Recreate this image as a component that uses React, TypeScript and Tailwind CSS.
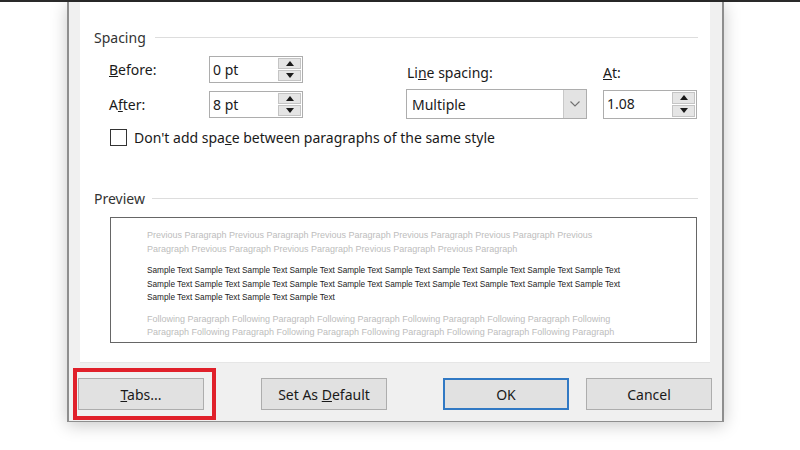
import React from 'react'

// Word "Paragraph" dialog, lower half (Spacing / Preview / buttons)

const prevLines = [
  'Previous Paragraph Previous Paragraph Previous Paragraph Previous Paragraph Previous Paragraph Previous',
  'Paragraph Previous Paragraph Previous Paragraph Previous Paragraph Previous Paragraph',
]
const sampleLines = [
  'Sample Text Sample Text Sample Text Sample Text Sample Text Sample Text Sample Text Sample Text Sample Text Sample Text',
  'Sample Text Sample Text Sample Text Sample Text Sample Text Sample Text Sample Text Sample Text Sample Text Sample Text',
  'Sample Text Sample Text Sample Text Sample Text',
]
const followLines = [
  'Following Paragraph Following Paragraph Following Paragraph Following Paragraph Following Paragraph Following',
  'Paragraph Following Paragraph Following Paragraph Following Paragraph Following Paragraph Following Paragraph',
  'Following Paragraph Following Paragraph Following Paragraph Following Paragraph Following Paragraph Following',
]

const Spinner = () => (
  <div className="flex flex-col gap-[1px] py-[1px] pr-[1px] w-[24px] h-full">
    <div className="flex-1 flex items-center justify-center bg-[#e5e5e5] border border-[#c4c4c4]">
      <svg width="8" height="5" viewBox="0 0 8 5">
        <polygon points="0,5 8,5 4,0" fill="#1a1a1a" />
      </svg>
    </div>
    <div className="flex-1 flex items-center justify-center bg-[#e5e5e5] border border-[#c4c4c4]">
      <svg width="8" height="5" viewBox="0 0 8 5">
        <polygon points="0,0 8,0 4,5" fill="#1a1a1a" />
      </svg>
    </div>
  </div>
)

const SpinBox = ({ value, h }: { value: string; h: string }) => (
  <div className={`flex items-center w-[94px] ${h} bg-white border border-[#adadad]`}>
    <span className="flex-1 pl-[3px] text-[14px] leading-none text-[#1a1a1a]">{value}</span>
    <Spinner />
  </div>
)

const Heading = ({ label, lineStart }: { label: string; lineStart: string }) => (
  <div className="flex items-center h-[20px]">
    <span className="text-[14px] text-[#333]">{label}</span>
    <div className={`flex-1 h-px bg-[#dddddd] ${lineStart}`} />
  </div>
)

const Btn = ({ children, focused }: { children: React.ReactNode; focused?: boolean }) => (
  <div
    className={`w-[126px] h-[32px] flex items-center justify-center bg-[#e1e1e1] text-[14px] text-[#1a1a1a] ${
      focused ? 'border-2 border-[#3179c4]' : 'border border-[#adadad]'
    }`}
  >
    {children}
  </div>
)

export default function App() {
  return (
    <div className="w-[800px] h-[450px] bg-white overflow-hidden font-['Noto_Sans',sans-serif]">
      <div className="h-[2px] bg-[#2a2a2a]" />

      <div className="ml-[67px] w-[657px] bg-[#f0f0f0] border-x-2 border-b border-[#8e8e8e] shadow-[0_3px_16px_rgba(0,0,0,0.22)]">
        {/* white content panel */}
        <div className="ml-[11px] mr-[12px] h-[361px] bg-white pt-[25px] pl-[14px] pr-[12px] border-b border-[#e6e6e6]">
          <Heading label="Spacing" lineStart="ml-[9px]" />

          <div className="flex mt-[9px]">
            <div className="ml-[15px] flex flex-col gap-[8px]">
              <div className="flex items-center h-[27px]">
                <span className="w-[100px] text-[14px] text-[#1a1a1a]">
                  <u>B</u>efore:
                </span>
                <SpinBox value="0 pt" h="h-[27px]" />
              </div>
              <div className="flex items-center h-[27px]">
                <span className="w-[100px] text-[14px] text-[#1a1a1a]">
                  A<u>f</u>ter:
                </span>
                <SpinBox value="8 pt" h="h-[27px]" />
              </div>
            </div>

            <div className="ml-[103px]">
              <div className="flex mt-[6px] h-[20px] items-center text-[14px] text-[#1a1a1a]">
                <span className="w-[197px] pl-[1px]">
                  Li<u>n</u>e spacing:
                </span>
                <span>
                  <u>A</u>t:
                </span>
              </div>
              <div className="flex items-center gap-[16px] mt-[7px]">
                <div className="flex w-[181px] h-[30px] bg-white border border-[#adadad]">
                  <span className="flex-1 flex items-center pl-[5px] text-[14px] text-[#1a1a1a]">Multiple</span>
                  <div className="w-[23px] flex items-center justify-center bg-[#e3e3e3] border-l border-[#c8c8c8]">
                    <svg width="10" height="6" viewBox="0 0 10 6">
                      <polyline points="0.5,0.5 5,5 9.5,0.5" fill="none" stroke="#707070" strokeWidth="1.1" />
                    </svg>
                  </div>
                </div>
                <SpinBox value="1.08" h="h-[29px]" />
              </div>
            </div>
          </div>

          <div className="flex items-center h-[20px] mt-[8px] ml-[16px]">
            <div className="w-[17px] h-[17px] border border-[#333] bg-white" />
            <span className="ml-[7px] text-[14px] text-[#1a1a1a]">
              Don't add spa<u>c</u>e between paragraphs of the same style
            </span>
          </div>

          <div className="mt-[41px]">
            <Heading label="Preview" lineStart="ml-[7px]" />
          </div>

          <div className="mt-[9px] ml-[16px] mr-px h-[126px] border border-[#666] overflow-hidden pt-[11px] pl-[36px] font-['Liberation_Sans',sans-serif] leading-[13.5px] whitespace-nowrap">
            <div className="text-[9px] text-[#bdbdbd]">
              {prevLines.map((l) => (
                <div key={l}>{l}</div>
              ))}
            </div>
            <div className="mt-[8px] text-[8.25px] text-[#1c1c1c]">
              {sampleLines.map((l, i) => (
                <div key={i}>{l}</div>
              ))}
            </div>
            <div className="mt-[8px] text-[9px] text-[#bdbdbd]">
              {followLines.map((l, i) => (
                <div key={i}>{l}</div>
              ))}
            </div>
          </div>
        </div>

        {/* button row */}
        <div className="flex items-center pt-[15px] pb-[11px] pl-[9px]">
          <div className="relative">
            <Btn>
              <span>
                <u>T</u>abs...
              </span>
            </Btn>
            <div className="absolute left-[-5px] right-[-12px] top-[-10px] bottom-[-10px] border-4 border-[#e0202a]" />
          </div>
          <div className="ml-[57px]">
            <Btn>
              <span>
                Set As <u>D</u>efault
              </span>
            </Btn>
          </div>
          <div className="ml-[56px]">
            <Btn focused>OK</Btn>
          </div>
          <div className="ml-[17px]">
            <Btn>Cancel</Btn>
          </div>
        </div>
      </div>
    </div>
  )
}
